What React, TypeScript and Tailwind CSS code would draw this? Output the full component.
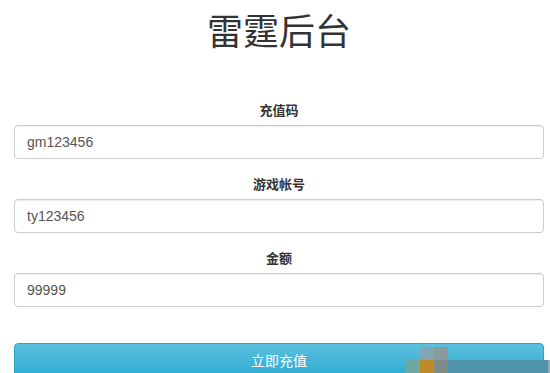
export default function App() {
  const fields = [
    { label: '充值码', value: 'gm123456' },
    { label: '游戏帐号', value: 'ty123456' },
    { label: '金额', value: '99999' },
  ];

  return (
    <div className="relative h-[373px] w-[550px] overflow-hidden bg-white font-['Liberation_Sans','Noto_Sans_CJK_SC',sans-serif]">
      <div className="ml-[14px] w-[530px]">
        <h1 className="pt-[9px] text-center text-[36px] leading-[40px] text-[#333] font-['Noto_Sans_CJK_SC',sans-serif]">
          雷霆后台
        </h1>

        <form className="mt-[51px] flex flex-col" onSubmit={(e) => e.preventDefault()}>
          {fields.map((f) => (
            <div key={f.label} className="mb-[15px] flex flex-col">
              <label className="mb-[5px] text-center text-[13px] leading-[20px] font-bold text-[#333] font-['Noto_Sans_CJK_SC',sans-serif]">
                {f.label}
              </label>
              <input
                defaultValue={f.value}
                className="h-[34px] w-full rounded-[4px] border border-[#ccc] px-[12px] text-[14px] text-[#555] shadow-[inset_0_1px_1px_rgba(0,0,0,0.075)] outline-none"
              />
            </div>
          ))}

          <button
            type="submit"
            className="mt-[21px] h-[34px] w-full rounded-[4px] border border-[#28a4c9] bg-gradient-to-b from-[#5bc0de] to-[#2aabd2] text-[14px] text-white font-['Noto_Sans_CJK_SC',sans-serif]"
          >
            立即充值
          </button>
        </form>
      </div>

      {/* watermark mosaic */}
      <div className="absolute left-[420px] top-[347px] h-[13px] w-[14px] bg-[#7fa6b4]" />
      <div className="absolute left-[434px] top-[347px] h-[13px] w-[14px] bg-[#8a9a9e]" />
      <div className="absolute left-[405px] top-[360px] flex h-[13px]">
        <div className="w-[15px] bg-[#6fa8a0]" />
        <div className="w-[14px] bg-[#c08a28]" />
        <div className="w-[14px] bg-[#7f8d86]" />
        <div className="w-[100px] bg-[#4f94aa]" />
        <div className="w-[7px] bg-[#9aa8ac]" />
      </div>
    </div>
  );
}
